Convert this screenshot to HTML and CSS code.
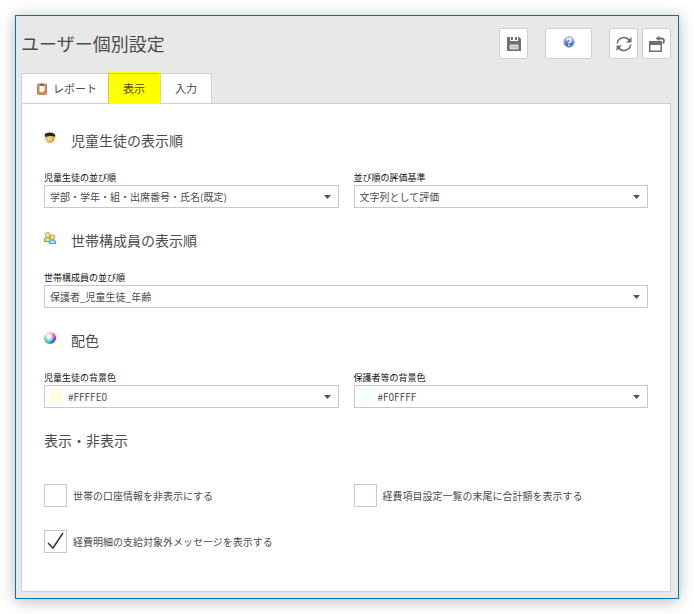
FILE: index.html
```html
<!DOCTYPE html>
<html lang="ja">
<head>
<meta charset="utf-8">
<title>ユーザー個別設定</title>
<link rel="stylesheet" href="styles.css">
</head>
<body>
<main class="window">
  <header class="header">
    <h1 class="title">ユーザー個別設定</h1>
    <div class="toolbar">
      <button class="tool" type="button" aria-label="保存">
        <svg width="14" height="14" viewBox="0 0 14 14"><path fill="#707070" d="M0 0h3v4h8V0h1l2 2v12H0z"/><path fill="#707070" d="M4 0h2v3H4zM8 0h2v3H8z"/><path fill="#c4c4c4" stroke="#fff" stroke-width=".7" d="M3 8h8v4H3z"/></svg>
      </button>
      <button class="tool tool-wide tool-help" type="button" aria-label="ヘルプ">
        <svg width="12" height="12" viewBox="0 0 12 12"><defs><linearGradient id="help" x1="0" y1="0" x2="0" y2="1"><stop offset="0" stop-color="#a9bfe8"/><stop offset="1" stop-color="#2558b0"/></linearGradient></defs><circle cx="6" cy="6" r="5.300" fill="url(#help)" stroke="#b4bccb"/><path fill="none" stroke="#fff" stroke-width="1.500" d="M4 4.500C4 2.300 8 2.300 8 4.500 8 6 6 5.800 6 7.500M6 8.500V10"/></svg>
      </button>
      <div class="tool-pair">
        <button class="tool" type="button" aria-label="更新">
          <svg width="16" height="16" viewBox="0 0 16 16"><g fill="none" stroke="#707070" stroke-width="1.600"><path d="M1.300 7.500A6.700 6.700 0 0 1 13.500 4.500"/><path d="M14.700 8.500A6.700 6.700 0 0 1 2.500 11.500"/></g><path fill="#707070" d="M15.500 1v5.500H10zM.5 15V9.500H6z"/></svg>
        </button>
        <button class="tool" type="button" aria-label="元に戻す">
          <svg width="16" height="16" viewBox="0 0 16 16"><path fill="#707070" fill-rule="evenodd" d="M0 5h13v11H0zM1.500 9v5.500h10V9z"/><path fill="none" stroke="#fff" stroke-width="4" d="M8 2.500h4.500"/><path fill="none" stroke="#707070" stroke-width="1.900" d="M9 2.500h3.500C15.700 2.500 15.500 7 13.500 7.300"/><path fill="#707070" d="M6.500 2.500L10.500 0v5z"/></svg>
        </button>
      </div>
    </div>
  </header>

  <nav class="tabs">
    <a class="tab tab-report" href="#report">
      <svg width="10" height="12" viewBox="0 0 10 12"><rect x=".5" y="1" width="9" height="10.500" rx="1" fill="#d98f4c" stroke="#bd7f4c"/><path fill="#f4f7fb" d="M2.500 3h5v4.500L6 9H2.500z"/><path fill="#b7c6da" d="M7.500 7.500L6 9V7.500z"/><path fill="#68758c" d="M3 1h1l1-1 1 1h1v2H3z"/></svg>
      レポート</a>
    <a class="tab tab-current" href="#display" aria-current="page">表示</a>
    <a class="tab" href="#input">入力</a>
  </nav>

  <form class="panel">
    <section class="section">
      <h2 class="heading">
        <svg class="heading-icon" width="12" height="12" viewBox="0 0 12 12"><defs><radialGradient id="face" cx=".4" cy=".5"><stop offset="0" stop-color="#ffe0a0"/><stop offset="1" stop-color="#dda344"/></radialGradient></defs><ellipse cx="6" cy="6.500" rx="4.700" ry="4.500" fill="url(#face)"/><path fill="#2b2520" d="M.5 3C1 1 4 .3 6.500 .5 10 .8 12 2.500 11.200 5 9 3.700 5 3.500 1.500 5z"/></svg>
        児童生徒の表示順</h2>
      <div class="fields">
        <div class="field">
          <label class="label" for="student-order">児童生徒の並び順</label>
          <div class="picker"><select class="select" id="student-order"><option>学部・学年・組・出席番号・氏名(既定)</option></select><svg class="arrow" width="7" height="4" viewBox="0 0 7 4"><path d="M0 0h7L3.500 4z"/></svg></div>
        </div>
        <div class="field">
          <label class="label" for="order-basis">並び順の評価基準</label>
          <div class="picker"><select class="select" id="order-basis"><option>文字列として評価</option></select><svg class="arrow" width="7" height="4" viewBox="0 0 7 4"><path d="M0 0h7L3.500 4z"/></svg></div>
        </div>
      </div>
    </section>

    <section class="section">
      <h2 class="heading">
        <svg class="heading-icon" width="12" height="12" viewBox="0 0 12 12"><g stroke-width="1.200"><path fill="#c9f0a0" stroke="#64c431" d="M.6 9.500V7.500Q1 5.500 3.500 5.500T6.500 7.500V9.500z"/><circle cx="3.700" cy="2.900" r="2.200" fill="#fff0cc" stroke="#e5a83a"/><path fill="#bce2ff" stroke="#4ba5ee" d="M5.400 11.300V9.500Q6 7.800 8.500 7.800T11.400 9.500V11.300z"/><circle cx="8.300" cy="5.200" r="2.200" fill="#fff0cc" stroke="#dd9834"/></g></svg>
        世帯構成員の表示順</h2>
      <div class="fields">
        <div class="field field-full">
          <label class="label" for="family-order">世帯構成員の並び順</label>
          <div class="picker"><select class="select" id="family-order"><option>保護者_児童生徒_年齢</option></select><svg class="arrow" width="7" height="4" viewBox="0 0 7 4"><path d="M0 0h7L3.500 4z"/></svg></div>
        </div>
      </div>
    </section>

    <section class="section">
      <h2 class="heading"><span class="heading-icon color-wheel"></span>配色</h2>
      <div class="fields">
        <div class="field">
          <label class="label" for="student-color">児童生徒の背景色</label>
          <div class="picker"><select class="select select-color" id="student-color"><option>#FFFFE0</option></select><span class="swatch swatch-yellow"></span><svg class="arrow" width="7" height="4" viewBox="0 0 7 4"><path d="M0 0h7L3.500 4z"/></svg></div>
        </div>
        <div class="field">
          <label class="label" for="guardian-color">保護者等の背景色</label>
          <div class="picker"><select class="select select-color" id="guardian-color"><option>#F0FFFF</option></select><span class="swatch swatch-azure"></span><svg class="arrow" width="7" height="4" viewBox="0 0 7 4"><path d="M0 0h7L3.500 4z"/></svg></div>
        </div>
      </div>
    </section>

    <section class="section">
      <h2 class="heading">表示・非表示</h2>
      <div class="checks">
        <label class="check"><input class="box" type="checkbox">世帯の口座情報を非表示にする</label>
        <label class="check"><input class="box" type="checkbox">経費項目設定一覧の末尾に合計額を表示する</label>
        <label class="check"><input class="box" type="checkbox" checked><svg class="tick" width="23" height="23" viewBox="0 0 23 23"><path d="M4 13l5 5L19 3"/></svg>経費明細の支給対象外メッセージを表示する</label>
      </div>
    </section>
  </form>
</main>
</body>
</html>
```
FILE: styles.css
```css
* {
  box-sizing: border-box;
}

body {
  display: flex;
  min-height: 100vh;
  margin: 0;
  padding: 15px;
  background: #fff;
  color: #4c4c4c;
  font-family: "Noto Sans CJK JP", sans-serif;
  font-size: 10px;
  line-height: 15px;
}

.window {
  display: flex;
  flex: 1;
  flex-direction: column;
  padding: 12px 7px 6px 5px;
  border: 1px solid #0072b8;
  background: #e8e8e8;
  box-shadow: 0 2px 14px rgba(0, 0, 0, 0.28);
}

.header {
  display: flex;
  align-items: center;
  justify-content: space-between;
  margin-bottom: 14px;
}

.title {
  margin: 0;
  font-size: 18px;
  font-weight: 400;
  line-height: 31px;
}

.toolbar {
  display: flex;
  gap: 17px;
}

.tool-pair {
  display: flex;
  gap: 4px;
}

.tool {
  display: flex;
  align-items: center;
  justify-content: center;
  width: 29px;
  height: 31px;
  padding: 0;
  border: 1px solid #d0d0d0;
  border-radius: 2px;
  background: #fff;
}

.tool-wide {
  width: 47px;
}

.tool-help {
  padding-bottom: 3px;
}

.tabs {
  display: flex;
}

.tab {
  display: flex;
  align-items: center;
  gap: 6px;
  height: 30px;
  padding: 0 14px;
  border: 1px solid #d0d0d0;
  border-bottom: 0;
  background: #fff;
  color: #4c4c4c;
  font-size: 11px;
  text-decoration: none;
}

.tab-report {
  padding: 0 11px 0 15px;
  border-right: 0;
}

.tab-current {
  z-index: 1;
  height: 32px;
  margin: -1px 0;
  border: 1px solid #ff0;
  border-left-color: #d4d400;
  background: linear-gradient(#d4d400 1px, #ff0 1px);
  color: #4c4c00;
}

.panel {
  flex: 1;
  padding: 22px;
  border: 1px solid #d0d0d0;
  background: #fff;
}

.section + .section {
  margin-top: 18px;
}

.heading {
  display: flex;
  align-items: center;
  gap: 15px;
  margin: 0 0 16px;
  font-size: 14px;
  font-weight: 400;
  line-height: 28px;
}

.heading-icon {
  flex: none;
  margin-bottom: 4px;
}

.color-wheel {
  width: 12px;
  height: 12px;
  border-radius: 50%;
  background:
    radial-gradient(circle at 45% 40%, #fff 10%, transparent 60%),
    conic-gradient(#f39adf, #e22b83, #8e25b8, #2878d8, #24c9c9, #35c776, #b8e887, #f39adf);
}

.fields,
.checks {
  display: grid;
  grid-template-columns: 1fr 1fr;
  column-gap: 15px;
}

.field-full {
  grid-column: 1 / -1;
}

.label {
  display: block;
  color: #111;
  font-size: 9px;
  line-height: 15px;
}

.picker {
  position: relative;
}

.select {
  display: block;
  width: 100%;
  height: 23px;
  padding: 0 20px 0 5px;
  border: 1px solid #c8c8c8;
  border-radius: 0;
  appearance: none;
  background: #fff;
  color: #4c4c4c;
  font: inherit;
}

.select-color {
  padding-left: 23px;
}

.arrow {
  position: absolute;
  top: 10px;
  right: 8px;
  fill: #555;
  pointer-events: none;
}

.swatch {
  position: absolute;
  top: 5px;
  left: 6px;
  width: 12px;
  height: 12px;
  pointer-events: none;
}

.swatch-yellow {
  background: #ffffe0;
}

.swatch-azure {
  background: #f0ffff;
}

.checks {
  row-gap: 23px;
  padding-top: 14px;
}

.check {
  position: relative;
  display: flex;
  align-items: center;
  gap: 6px;
}

.box {
  flex: none;
  width: 23px;
  height: 23px;
  margin: 0;
  border: 1px solid #c8c8c8;
  appearance: none;
  background: #fff;
}

.tick {
  position: absolute;
  top: 0;
  left: 0;
  fill: none;
  stroke: #333;
  stroke-width: 1.5;
  pointer-events: none;
}

.box:not(:checked) + .tick {
  display: none;
}
```
